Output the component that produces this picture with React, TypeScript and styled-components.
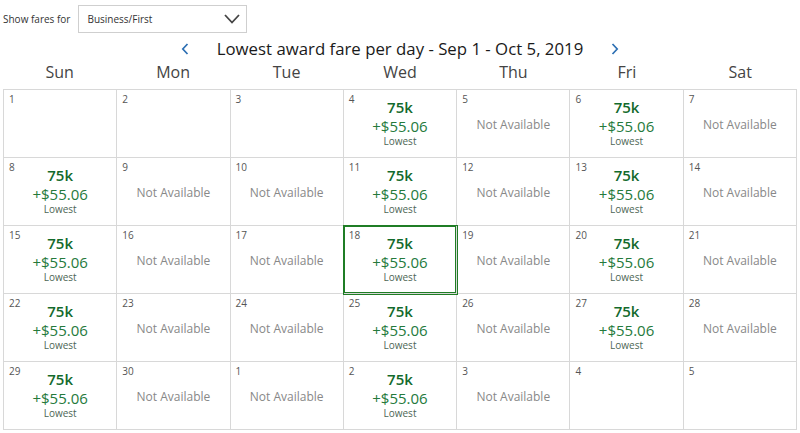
import React from 'react';
import styled, { createGlobalStyle } from 'styled-components';

type DayType = {
  day: number
  status: 'fare' | 'na' | 'none'
  selected?: boolean
}

const days: DayType[] = [
  { day: 1, status: 'none' }, { day: 2, status: 'none' }, { day: 3, status: 'none' },
  { day: 4, status: 'fare' }, { day: 5, status: 'na' }, { day: 6, status: 'fare' }, { day: 7, status: 'na' },
  { day: 8, status: 'fare' }, { day: 9, status: 'na' }, { day: 10, status: 'na' },
  { day: 11, status: 'fare' }, { day: 12, status: 'na' }, { day: 13, status: 'fare' }, { day: 14, status: 'na' },
  { day: 15, status: 'fare' }, { day: 16, status: 'na' }, { day: 17, status: 'na' },
  { day: 18, status: 'fare', selected: true }, { day: 19, status: 'na' }, { day: 20, status: 'fare' }, { day: 21, status: 'na' },
  { day: 22, status: 'fare' }, { day: 23, status: 'na' }, { day: 24, status: 'na' },
  { day: 25, status: 'fare' }, { day: 26, status: 'na' }, { day: 27, status: 'fare' }, { day: 28, status: 'na' },
  { day: 29, status: 'fare' }, { day: 30, status: 'na' }, { day: 1, status: 'na' },
  { day: 2, status: 'fare' }, { day: 3, status: 'na' }, { day: 4, status: 'none' }, { day: 5, status: 'none' },
]

const weekDays = ['Sun', 'Mon', 'Tue', 'Wed', 'Thu', 'Fri', 'Sat']

const Chevron = ({ dir }: { dir: 'left' | 'right' }) => (
  <svg width="8" height="12" viewBox="0 0 8 12">
    <path
      d={dir === 'left' ? 'M6.5 1 L1.8 6 L6.5 11' : 'M1.5 1 L6.2 6 L1.5 11'}
      fill="none"
      stroke="#2c6fb3"
      strokeWidth="1.7"
    />
  </svg>
)

export default function App() {
  return (
    <>
      <GlobalStyle />
      <Page>
        <TopBar>
          <Label>Show fares for</Label>
          <Select>
            <span>Business/First</span>
            <svg width="16" height="10" viewBox="0 0 16 10">
              <path d="M1 1 L8 8.5 L15 1" fill="none" stroke="#444" strokeWidth="1.8" />
            </svg>
          </Select>
        </TopBar>
        <TitleRow>
          <Chevron dir="left" />
          <Title>Lowest award fare per day - Sep 1 - Oct 5, 2019</Title>
          <Chevron dir="right" />
        </TitleRow>
        <WeekRow>
          {weekDays.map(d => <WeekDay key={d}>{d}</WeekDay>)}
        </WeekRow>
        <Grid>
          {days.map((d, i) => (
            <Cell key={i} selected={d.selected}>
              <DayNum>{d.day}</DayNum>
              {d.status === 'fare' && (
                <Fare>
                  <Miles>75k</Miles>
                  <Tax>+$55.06</Tax>
                  <Note>Lowest</Note>
                </Fare>
              )}
              {d.status === 'na' && <NotAvail>Not Available</NotAvail>}
            </Cell>
          ))}
        </Grid>
      </Page>
    </>
  );
}

const GlobalStyle = createGlobalStyle`
  * {
    box-sizing: border-box;
  }
  body {
    margin: 0;
    background: #fff;
    font-family: "Open Sans", "DejaVu Sans", sans-serif;
  }
`

const Page = styled.div`
  width: 800px;
  padding: 5px 3px 0;
`

const TopBar = styled.div`
  display: flex;
  align-items: center;
  height: 28px;
`

const Label = styled.span`
  font-size: 10px;
  color: #333;
`

const Select = styled.div`
  margin-left: 8px;
  width: 169px;
  height: 28px;
  border: 1px solid #cfcfcf;
  display: flex;
  align-items: center;
  justify-content: space-between;
  padding: 0 6px 0 8px;
  font-size: 10px;
  color: #333;
`

const TitleRow = styled.div`
  margin-top: 5px;
  height: 22px;
  display: flex;
  align-items: center;
  justify-content: center;
  gap: 28px;
`

const Title = styled.div`
  font-size: 16.8px;
  line-height: 22px;
  color: #1a1a1a;
`

const WeekRow = styled.div`
  margin-top: 1px;
  margin-bottom: 6px;
  display: grid;
  grid-template-columns: repeat(7, 1fr);
`

const WeekDay = styled.div`
  text-align: center;
  font-size: 16px;
  line-height: 22px;
  color: #444;
`

const Grid = styled.div`
  display: grid;
  grid-template-columns: repeat(7, 1fr);
  border-top: 1px solid #d8d8d8;
  border-left: 1px solid #d8d8d8;
`

const Cell = styled.div<{ selected?: boolean }>`
  position: relative;
  height: 68px;
  border-right: 1px solid #d8d8d8;
  border-bottom: 1px solid #d8d8d8;
  display: grid;
  grid-template: 1fr / 1fr;
  padding: 3px 5px;
  ${p => p.selected && `
    z-index: 1;
    box-shadow: 0 0 0 1px #1f7d25, inset 0 0 0 1px #1f7d25;
  `}
`

const DayNum = styled.div`
  grid-area: 1 / 1;
  align-self: start;
  justify-self: start;
  font-size: 10px;
  line-height: 12px;
  color: #555;
`

const Fare = styled.div`
  grid-area: 1 / 1;
  align-self: start;
  justify-self: center;
  margin-top: 5px;
  text-align: center;
`

const Miles = styled.div`
  font-size: 15px;
  line-height: 19px;
  font-weight: 600;
  color: #136a2c;
`

const Tax = styled.div`
  font-size: 15px;
  line-height: 18px;
  color: #257a3c;
`

const Note = styled.div`
  font-size: 10px;
  line-height: 13px;
  color: #4d6655;
`

const NotAvail = styled.div`
  grid-area: 1 / 1;
  align-self: start;
  justify-self: center;
  margin-top: 24px;
  font-size: 12px;
  line-height: 16px;
  color: #888;
`
